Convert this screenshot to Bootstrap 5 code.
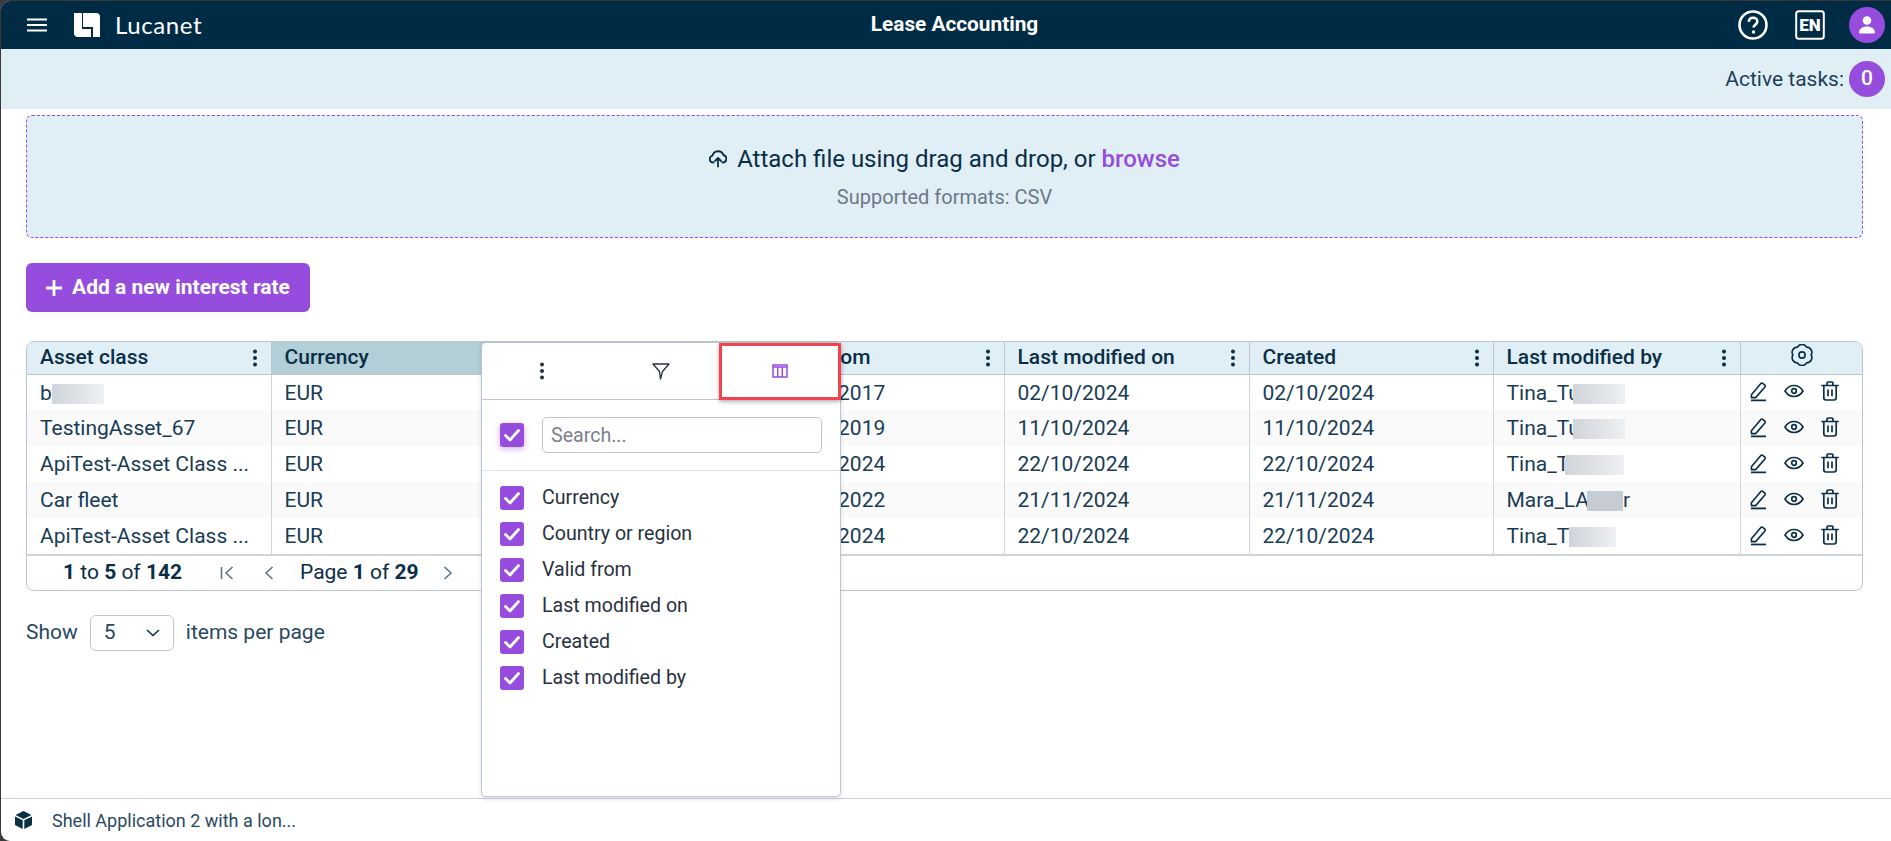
<!DOCTYPE html>
<html lang="en">
<head>
  <meta charset="UTF-8">
  <meta name="viewport" content="width=device-width, initial-scale=1.0">
  <title>Lease Accounting</title>
  <link href="https://cdn.jsdelivr.net/npm/bootstrap@5.3.0/dist/css/bootstrap.min.css" rel="stylesheet">
  <style>
    html, body { height: 100%; overflow: hidden; }
    body {
      background-color: #3a3a3a;
      padding: 1px 0 0 1px;
      font-family: Roboto, "Liberation Sans", sans-serif;
      font-size: 21px;
      color: #0b2e47;
    }
    svg { display: block; flex: none; }
    .app-shell {
      height: 840px;
      background-color: #fff;
      border-radius: 9px 0 0 9px;
      overflow: hidden;
    }
    .top-bar { height: 48px; background-color: #002b45; color: #fff; }
    .burger { margin-left: 26px; }
    .brand-mark { margin-left: 27px; }
    .brand-name {
      margin-left: 15px;
      font-family: Lato, sans-serif;
      font-weight: 400;
      font-size: 24px;
      letter-spacing: .6px;
      line-height: 1;
    }
    .app-title { font-weight: 700; font-size: 20.8px; left: 0; right: 0; padding-left: 17px; }
    .top-right { margin-right: 6px; }
    .lang-box { margin-left: 27px; }
    .purple-dot {
      width: 36px;
      height: 36px;
      border-radius: 50%;
      background-color: #964cdc;
      color: #fff;
    }
    .avatar-dot { margin-left: 24px; }
    .tasks-bar {
      height: 60px;
      background-color: #e0eff5;
      padding-right: 6px;
      padding-top: 12px;
      color: #1d3f58;
    }
    .tasks-label { margin-right: 5px; line-height: 36px; }
    .page-body { padding: 6px 28px 0 25px; }
    .drop-box {
      height: 123px;
      background-color: #e0eff5;
      border: 1px dashed #964cdc;
      border-radius: 6px;
    }
    .drop-title { font-size: 24px; line-height: 28px; gap: 10px; }
    .drop-link { color: #964cdc; font-weight: 500; text-decoration: none; }
    .drop-sub { color: #6d7889; font-size: 20px; margin-top: 12px; line-height: 24px; }
    .add-rate {
      margin-top: 25px;
      height: 49px;
      width: 284px;
      gap: 10px;
      background-color: #964cdc;
      border: 0;
      border-radius: 6px;
      font-weight: 700;
      font-size: 21px;
      color: #fff;
    }
    .add-rate:hover { background-color: #964cdc; color: #fff; }
    .grid-wrap {
      margin-top: 29px;
      border: 1px solid #bcc6d2;
      border-radius: 8px;
      overflow: hidden;
    }
    .rate-table { table-layout: fixed; margin: 0; font-size: 21px; --bs-table-color: #0b2e47; }
    .rate-table th, .rate-table td {
      height: 36px;
      padding: 2px 8px 0 13px;
      border: 0;
      border-right: 1px solid #cdd4dd;
      vertical-align: middle;
      white-space: nowrap;
      overflow: hidden;
      box-shadow: none;
      color: #193c55;
    }
    .rate-table th {
      height: 32px;
      padding-top: 0;
      background-color: #e0eff5;
      border-bottom: 1px solid #bcc6d2;
      border-right-color: #bcc6d2;
      font-weight: 500;
      color: #0b2e47;
    }
    .rate-table th.sel-col { background-color: #b2ced6; }
    .rate-table tr > :last-child { border-right: 0; }
    .rate-table tbody tr:nth-child(even) td { background-color: #fafafa; }
    .rate-table .row-actions { padding: 0 0 0 9px; color: #0b2e47; }
    .action-set { gap: 17px; margin-top: -2px; }
    .gear-cell { padding-right: 12px !important; }
    .gear-up { margin-top: -6px; }
    .blur-a { display: inline-block; height: 20px; vertical-align: -4px; background: linear-gradient(90deg, #cfd5da, #eef0f2); }
    .w-52 { width: 52px; }
    .w-52b { width: 52px; margin-left: -7px; }
    .w-59 { width: 59px; margin-left: -4px; }
    .w-47 { width: 47px; }
    .w-36 { width: 36px; margin-left: -2px; background: #c5ccd3; }
    .pager-row {
      height: 36px;
      border-top: 2px solid #cdd4dd;
      padding-left: 36px;
    }
    .pager-count { width: 157px; }
    .pager-prev { margin: 0 26px 0 30px; }
    .page-label { width: 118px; white-space: nowrap; }
    .pager-next { margin-left: 25px; }
    .show-row { margin-top: 24px; height: 36px; color: #29485f; }
    .size-pick {
      width: 84px;
      height: 36px;
      margin: 0 12px 0 12px;
      border: 1px solid #bcc6d2;
      border-radius: 6px;
      padding: 0 13px;
    }
    .col-menu {
      position: absolute;
      left: 480px;
      top: 341px;
      width: 360px;
      height: 455px;
      background-color: #fff;
      border: 1px solid #bcc6d2;
      border-radius: 5px;
      box-shadow: 0 2px 5px rgba(0, 0, 0, .12);
      font-size: 19.6px;
      color: #28323e;
    }
    .menu-tabs { height: 57px; border-bottom: 1px solid #bcc6d2; }
    .menu-tab { flex: 1 1 0; position: relative; height: 100%; }
    .menu-tab.active-tab::after {
      content: "";
      position: absolute;
      left: -2px;
      right: -1px;
      top: 0;
      bottom: -1px;
      border: 3px solid #f4434c;
      box-shadow: 0 2px 4px rgba(0, 0, 0, .3);
    }
    .menu-search { height: 71px; border-bottom: 1px solid #e1e4ea; padding: 0 18px; }
    .menu-search input {
      height: 36px;
      width: 281px;
      margin-left: 18px;
      padding: 0 8px;
      border: 1px solid #bcc6d2;
      border-radius: 5px;
      font-size: 19.6px;
      color: #28323e;
      box-shadow: none;
    }
    .menu-search input::placeholder { color: #7b8189; }
    .menu-list { padding: 9px 18px 0; }
    .menu-item { height: 36px; }
    .tick-box {
      width: 24px;
      height: 24px;
      margin-right: 18px;
      background-color: #964cdc;
      border-radius: 3px;
    }
    .tick-glow { box-shadow: 0 2px 6px rgba(150, 76, 220, .45); }
    .shell-foot {
      height: 43px;
      border-top: 1px solid #cfcfe0;
      padding-left: 14px;
      font-size: 18px;
      color: #29485f;
    }
    .shell-foot span { margin-left: 20px; }
  </style>
</head>
<body>
  <svg width="0" height="0" class="position-absolute">
    <defs>
      <symbol id="ic-dots" viewBox="0 0 16 20"><circle cx="8" cy="3.5" r="2" fill="currentColor"/><circle cx="8" cy="10" r="2" fill="currentColor"/><circle cx="8" cy="16.5" r="2" fill="currentColor"/></symbol>
      <symbol id="ic-pen" viewBox="0 0 18 22"><path d="M1.5 14.5 11.5 2.5a1.4 1.4 0 0 1 2-.1l2.2 1.9a1.4 1.4 0 0 1 .1 2L6 17.5H1.5z" fill="none" stroke="currentColor" stroke-width="1.7" stroke-linejoin="round"/><path d="M1 20.5h16" stroke="currentColor" stroke-width="1.8"/></symbol>
      <symbol id="ic-eye" viewBox="0 0 20 14"><path d="M1 7c2.200-3.600 5.200-5.500 9-5.500S16.800 3.400 19 7c-2.200 3.600-5.200 5.500-9 5.500S3.200 10.600 1 7z" fill="none" stroke="currentColor" stroke-width="1.700"/><circle cx="10" cy="7" r="2.300" fill="none" stroke="currentColor" stroke-width="1.700"/></symbol>
      <symbol id="ic-bin" viewBox="0 0 18 20"><path d="M1 4.500h16M6 4.500V2.200c0-.7.5-1.200 1.200-1.200h3.600c.7 0 1.200.5 1.200 1.200v2.300M2.800 4.500v12.300c0 1.200.9 2.200 2.200 2.200h8c1.300 0 2.200-1 2.200-2.200V4.500M7 9v5.500M11 9v5.500" fill="none" stroke="currentColor" stroke-width="1.700" stroke-linecap="round"/></symbol>
      <symbol id="ic-check" viewBox="0 0 24 24"><path d="M5.500 12.500 10 17 18.500 7.500" fill="none" stroke="#fff" stroke-width="2.800" stroke-linecap="round" stroke-linejoin="round"/></symbol>
    </defs>
  </svg>

  <div class="app-shell d-flex flex-column position-relative">
    <header class="top-bar d-flex align-items-center position-relative">
      <svg class="burger" width="20" height="14" viewBox="0 0 20 14"><path d="M0 1.500h20M0 7h20M0 12.500h20" stroke="#fff" stroke-width="2"/></svg>
      <svg class="brand-mark" width="26" height="24" viewBox="0 0 26 24"><path d="M0 0h8v16h9v8H4a4 4 0 0 1-4-4z" fill="#fff"/><path d="M9 0h13a4 4 0 0 1 4 4v20h-7V14H9z" fill="#fff"/></svg>
      <span class="brand-name">Lucanet</span>
      <div class="app-title position-absolute text-center">Lease Accounting</div>
      <div class="top-right ms-auto d-flex align-items-center">
        <svg width="30" height="30" viewBox="0 0 30 30"><circle cx="15" cy="15" r="13.500" fill="none" stroke="#fff" stroke-width="2.600"/><path d="M10.800 11.800c.2-2.600 2-4 4.300-4 2.400 0 4.200 1.500 4.200 3.700 0 3.200-3.700 3.200-3.700 6" fill="none" stroke="#fff" stroke-width="2.600"/><circle cx="15.500" cy="22" r="1.700" fill="#fff"/></svg>
        <svg class="lang-box" width="30" height="30" viewBox="0 0 30 30"><rect x="1.200" y="1.200" width="27.600" height="27.600" rx="2.500" fill="none" stroke="#fff" stroke-width="2"/><text x="15" y="21" text-anchor="middle" fill="#fff" font-family="Roboto, sans-serif" font-weight="900" font-size="17">EN</text></svg>
        <div class="purple-dot avatar-dot d-flex align-items-center justify-content-center">
          <svg width="16" height="18" viewBox="0 0 16 18"><circle cx="8" cy="4.500" r="4.300" fill="#fff"/><path d="M1 17.500c-.8 0-1-.5-1-1.200C.3 12.800 3.400 10.500 8 10.500s7.700 2.300 8 5.800c0 .7-.2 1.200-1 1.200z" fill="#fff"/></svg>
        </div>
      </div>
    </header>

    <div class="tasks-bar d-flex justify-content-end">
      <span class="tasks-label">Active tasks:</span>
      <div class="purple-dot d-flex align-items-center justify-content-center fw-medium">0</div>
    </div>

    <main class="page-body flex-grow-1">
      <div class="drop-box d-flex flex-column align-items-center justify-content-center">
        <div class="drop-title d-flex align-items-center">
          <svg width="18" height="18" viewBox="0 0 18 18"><path d="M4.500 12.500H4a3.500 3.500 0 0 1-.5-6.900A5.700 5.700 0 0 1 14.400 5 3.800 3.800 0 0 1 14 12.500h-.5M9 16.500V8.500M6 11l3-3 3 3" fill="none" stroke="#0b2e47" stroke-width="1.800" stroke-linecap="round" stroke-linejoin="round"/></svg>
          <span>Attach file using drag and drop, or <a href="#" class="drop-link">browse</a></span>
        </div>
        <div class="drop-sub">Supported formats: CSV</div>
      </div>

      <button type="button" class="btn add-rate d-flex align-items-center justify-content-center">
        <svg width="16" height="16" viewBox="0 0 16 16"><path d="M8 0v16M0 8h16" stroke="#fff" stroke-width="2.800"/></svg>
        Add a new interest rate
      </button>

      <div class="grid-wrap">
        <table class="table rate-table">
          <colgroup>
            <col style="width:244px"><col style="width:245px"><col style="width:244px"><col style="width:244px"><col style="width:245px"><col style="width:244px"><col style="width:247px"><col>
          </colgroup>
          <thead>
            <tr>
              <th><div class="d-flex justify-content-between align-items-center">Asset class<svg width="16" height="20"><use href="#ic-dots"/></svg></div></th>
              <th class="sel-col">Currency</th>
              <th></th>
              <th><div class="d-flex justify-content-between align-items-center">Valid from<svg width="16" height="20"><use href="#ic-dots"/></svg></div></th>
              <th><div class="d-flex justify-content-between align-items-center">Last modified on<svg width="16" height="20"><use href="#ic-dots"/></svg></div></th>
              <th><div class="d-flex justify-content-between align-items-center">Created<svg width="16" height="20"><use href="#ic-dots"/></svg></div></th>
              <th><div class="d-flex justify-content-between align-items-center">Last modified by<svg width="16" height="20"><use href="#ic-dots"/></svg></div></th>
              <th class="gear-cell"><svg class="mx-auto gear-up" width="22" height="22" viewBox="2.200 2.200 17.600 17.600"><path d="M18.300 11A4.200 4.200 0 0 1 14.650 17.320 4.200 4.200 0 0 1 7.350 17.320 4.200 4.200 0 0 1 3.700 11 4.200 4.200 0 0 1 7.350 4.680 4.200 4.200 0 0 1 14.650 4.680 4.200 4.200 0 0 1 18.300 11z" fill="none" stroke="#0b2e47" stroke-width="1.300" stroke-linejoin="round"/><circle cx="11" cy="11" r="2.500" fill="none" stroke="#0b2e47" stroke-width="1.300"/></svg></th>
            </tr>
          </thead>
          <tbody>
            <tr>
              <td>b<span class="blur-a w-52"></span></td><td>EUR</td><td></td><td>01/01/2017</td><td>02/10/2024</td><td>02/10/2024</td><td>Tina_Tu<span class="blur-a w-52b"></span></td>
              <td class="row-actions"><div class="d-flex align-items-center action-set"><svg width="17" height="21"><use href="#ic-pen"/></svg><svg width="20" height="14"><use href="#ic-eye"/></svg><svg width="18" height="20"><use href="#ic-bin"/></svg></div></td>
            </tr>
            <tr>
              <td>TestingAsset_67</td><td>EUR</td><td></td><td>01/01/2019</td><td>11/10/2024</td><td>11/10/2024</td><td>Tina_Tu<span class="blur-a w-52b"></span></td>
              <td class="row-actions"><div class="d-flex align-items-center action-set"><svg width="17" height="21"><use href="#ic-pen"/></svg><svg width="20" height="14"><use href="#ic-eye"/></svg><svg width="18" height="20"><use href="#ic-bin"/></svg></div></td>
            </tr>
            <tr>
              <td>ApiTest-Asset Class ...</td><td>EUR</td><td></td><td>01/01/2024</td><td>22/10/2024</td><td>22/10/2024</td><td>Tina_T<span class="blur-a w-59"></span></td>
              <td class="row-actions"><div class="d-flex align-items-center action-set"><svg width="17" height="21"><use href="#ic-pen"/></svg><svg width="20" height="14"><use href="#ic-eye"/></svg><svg width="18" height="20"><use href="#ic-bin"/></svg></div></td>
            </tr>
            <tr>
              <td>Car fleet</td><td>EUR</td><td></td><td>01/01/2022</td><td>21/11/2024</td><td>21/11/2024</td><td>Mara_LA<span class="blur-a w-36"></span>r</td>
              <td class="row-actions"><div class="d-flex align-items-center action-set"><svg width="17" height="21"><use href="#ic-pen"/></svg><svg width="20" height="14"><use href="#ic-eye"/></svg><svg width="18" height="20"><use href="#ic-bin"/></svg></div></td>
            </tr>
            <tr>
              <td>ApiTest-Asset Class ...</td><td>EUR</td><td></td><td>01/01/2024</td><td>22/10/2024</td><td>22/10/2024</td><td>Tina_T<span class="blur-a w-47"></span></td>
              <td class="row-actions"><div class="d-flex align-items-center action-set"><svg width="17" height="21"><use href="#ic-pen"/></svg><svg width="20" height="14"><use href="#ic-eye"/></svg><svg width="18" height="20"><use href="#ic-bin"/></svg></div></td>
            </tr>
          </tbody>
        </table>
        <div class="pager-row d-flex align-items-center">
          <div class="pager-count"><b class="fw-bold">1</b> to <b class="fw-bold">5</b> of <b class="fw-bold">142</b></div>
          <svg width="14" height="14" viewBox="0 0 14 14"><path d="M1.500 1v12M12.500 1 6 7l6.500 6" fill="none" stroke="#5c7488" stroke-width="1.600"/></svg>
          <svg class="pager-prev" width="10" height="14" viewBox="0 0 10 14"><path d="M8.500 1 2 7l6.500 6" fill="none" stroke="#5c7488" stroke-width="1.600"/></svg>
          <div class="page-label">Page <b class="fw-bold">1</b> of <b class="fw-bold">29</b></div>
          <svg class="pager-next" width="10" height="14" viewBox="0 0 10 14"><path d="M1.500 1 8 7l-6.500 6" fill="none" stroke="#5c7488" stroke-width="1.600"/></svg>
        </div>
      </div>

      <div class="show-row d-flex align-items-center">
        <span>Show</span>
        <div class="size-pick d-flex align-items-center justify-content-between">5
          <svg width="14" height="8" viewBox="0 0 14 8"><path d="M1 1l6 5.500L13 1" fill="none" stroke="#0b2e47" stroke-width="1.600"/></svg>
        </div>
        <span>items per page</span>
      </div>
    </main>

    <footer class="shell-foot d-flex align-items-center">
      <svg width="17" height="18" viewBox="0 0 17 18"><path d="M8.500 0 16.500 4 8.500 8 .5 4zM0 5.500l7.700 3.800V18L0 14zM17 5.500 9.300 9.300V18L17 14z" fill="#0b2e47"/></svg>
      <span>Shell Application 2 with a lon...</span>
    </footer>

    <div class="col-menu">
      <div class="menu-tabs d-flex align-items-center">
        <div class="menu-tab d-flex align-items-center justify-content-center"><svg width="16" height="20"><use href="#ic-dots"/></svg></div>
        <div class="menu-tab d-flex align-items-center justify-content-center">
          <svg width="18" height="17" viewBox="0 0 18 17"><path d="M1 1h16l-6.500 7.500-2 7.500-1-7.500z" fill="none" stroke="#28323e" stroke-width="1.300" stroke-linejoin="round"/></svg>
        </div>
        <div class="menu-tab active-tab d-flex align-items-center justify-content-center">
          <svg width="16" height="14" viewBox="0 0 16 14"><path d="M1 1h14v12H1zM1 3h14M5.700 3v10M10.300 3v10" fill="none" stroke="#964cdc" stroke-width="1.500"/></svg>
        </div>
      </div>
      <div class="menu-search d-flex align-items-center">
        <div class="tick-box tick-glow flex-shrink-0 me-0"><svg width="24" height="24"><use href="#ic-check"/></svg></div>
        <input type="text" class="form-control" placeholder="Search...">
      </div>
      <div class="menu-list">
        <div class="menu-item d-flex align-items-center"><div class="tick-box"><svg width="24" height="24"><use href="#ic-check"/></svg></div>Currency</div>
        <div class="menu-item d-flex align-items-center"><div class="tick-box"><svg width="24" height="24"><use href="#ic-check"/></svg></div>Country or region</div>
        <div class="menu-item d-flex align-items-center"><div class="tick-box"><svg width="24" height="24"><use href="#ic-check"/></svg></div>Valid from</div>
        <div class="menu-item d-flex align-items-center"><div class="tick-box"><svg width="24" height="24"><use href="#ic-check"/></svg></div>Last modified on</div>
        <div class="menu-item d-flex align-items-center"><div class="tick-box"><svg width="24" height="24"><use href="#ic-check"/></svg></div>Created</div>
        <div class="menu-item d-flex align-items-center"><div class="tick-box"><svg width="24" height="24"><use href="#ic-check"/></svg></div>Last modified by</div>
      </div>
    </div>
  </div>

  <script src="https://cdn.jsdelivr.net/npm/bootstrap@5.3.0/dist/js/bootstrap.bundle.min.js"></script>
</body>
</html>
